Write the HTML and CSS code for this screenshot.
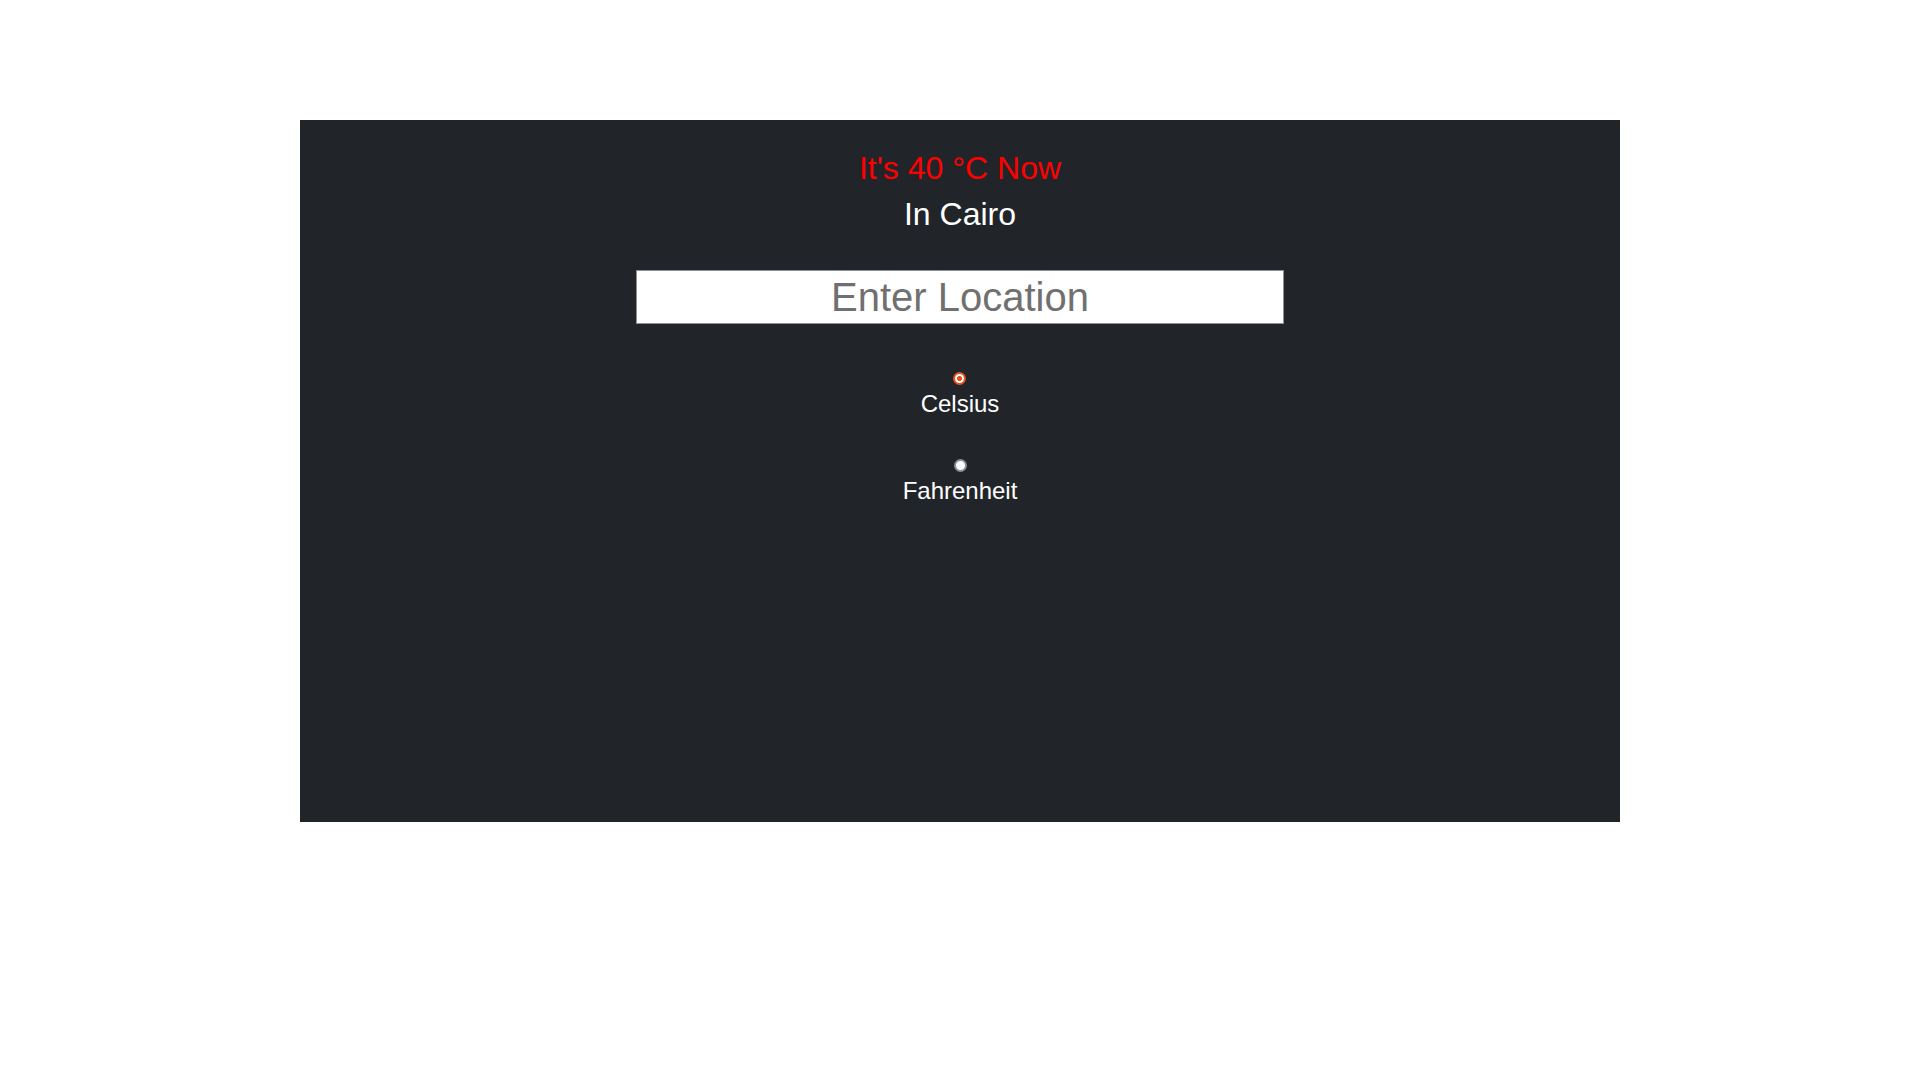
FILE: index.html
```html
<!DOCTYPE html>
<html lang="en">
<head>
<meta charset="utf-8">
<title>Weather</title>
<link rel="stylesheet" href="styles.css">
</head>
<body>
<main class="panel">
  <h2 class="temp">It's 40 °C Now</h2>
  <h2 class="city">In Cairo</h2>
  <input class="location" type="text" placeholder="Enter Location">
  <div class="units">
    <div class="option">
      <input class="radio" type="radio" name="unit" id="c" checked>
      <label class="label" for="c">Celsius</label>
    </div>
    <div class="option">
      <input class="radio" type="radio" name="unit" id="f">
      <label class="label" for="f">Fahrenheit</label>
    </div>
  </div>
</main>
</body>
</html>
```
FILE: styles.css
```css
html, body {
  margin: 0;
  padding: 0;
  background: #ffffff;
}

body {
  font-family: "Liberation Sans", Arial, sans-serif;
}

.panel {
  box-sizing: border-box;
  width: 1320px;
  height: 702px;
  margin: 120px auto 0;
  padding-top: 29px;
  background: #212529;
  display: flex;
  flex-direction: column;
  align-items: center;
  text-align: center;
}

.temp,
.city {
  font-size: 32px;
  line-height: 1.2;
  font-weight: 400;
  margin: 0 0 8px;
}

.temp {
  color: #ff0000;
}

.city {
  color: #ffffff;
  margin-bottom: 36px;
}

.location {
  box-sizing: border-box;
  width: 648px;
  height: 54px;
  margin: 0;
  padding: 2px 4px 0;
  border: 1px solid #8f8f9d;
  border-radius: 0;
  background: #ffffff;
  font-family: "Liberation Sans", Arial, sans-serif;
  font-size: 40px;
  text-align: center;
  color: #212529;
  outline: none;
}

.location::placeholder {
  color: #707070;
  opacity: 1;
}

.units {
  margin-top: 48px;
  display: flex;
  flex-direction: column;
  align-items: center;
  gap: 37px;
}

.option {
  display: flex;
  flex-direction: column;
  align-items: center;
}

.radio {
  -webkit-appearance: none;
  appearance: none;
  box-sizing: border-box;
  width: 13px;
  height: 13px;
  margin: 0;
  border-radius: 50%;
  border: 2px solid #8e8e9a;
  background: #ffffff;
}

.radio:checked {
  border: 2px solid #e8501e;
  background: radial-gradient(circle, #e8501e 0 2.2px, #ffffff 2.8px);
}

.label {
  margin-top: 1px;
  font-size: 24px;
  line-height: 36px;
  color: #ffffff;
}
```
